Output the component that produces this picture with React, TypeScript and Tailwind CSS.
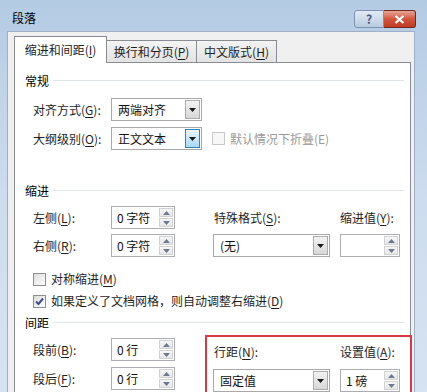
import type { ReactNode } from 'react';
import cn from 'clsx';

const Key = ({ k }: { k: string }) => (
  <>
    (<u className="underline-offset-2">{k}</u>)
  </>
);

const Heading = ({ text, className }: { text: string; className?: string }) => (
  <div className={cn('flex h-[16px] items-center pl-[10px] pr-[6px]', className)}>
    <span className="leading-[16px]">{text}</span>
    <div className="ml-[4px] h-[2px] flex-1 border-t border-b border-t-[#dde5ea] border-b-white" />
  </div>
);

const Arrow = ({ up, color = '#3b3b3b' }: { up?: boolean; color?: string }) => (
  <svg width="7" height="4" viewBox="0 0 7 4">
    <path d={up ? 'M3.5 0L7 4H0z' : 'M0 0h7L3.5 4z'} fill={color} />
  </svg>
);

const Select = ({ value, w, hot }: { value: string; w: string; hot?: boolean }) => (
  <div className={cn('flex h-[23px] border border-[#a8a8a8] bg-white', w)}>
    <div className="flex-1 pl-[6px] leading-[21px] text-[#111]">{value}</div>
    <div
      className={cn(
        'm-[1px] flex w-[15px] items-center justify-center border',
        hot
          ? 'border-[#3c7fb1] bg-gradient-to-b from-[#eaf6fd] to-[#a7d9f5]'
          : 'border-[#acacac] bg-gradient-to-b from-[#f2f2f2] to-[#d8d8d8]'
      )}
    >
      <Arrow color="#1a1a1a" />
    </div>
  </div>
);

const Spin = ({ value, w = 'w-[64px]' }: { value?: string; w?: string }) => (
  <div className={cn('flex h-[23px] border border-[#abadb3] bg-white', w)}>
    <div className="flex-1 pl-[5px] leading-[21px] text-[#111]">{value}</div>
    <div className="m-[1px] flex w-[14px] flex-col gap-[1px]">
      <div className="flex flex-1 items-center justify-center border border-[#d2d2d2] bg-gradient-to-b from-[#f7f7f7] to-[#e6e6e6]">
        <Arrow up color="#6a7a94" />
      </div>
      <div className="flex flex-1 items-center justify-center border border-[#d2d2d2] bg-gradient-to-b from-[#f7f7f7] to-[#e6e6e6]">
        <Arrow color="#6a7a94" />
      </div>
    </div>
  </div>
);

const Check = ({ checked, disabled }: { checked?: boolean; disabled?: boolean }) => (
  <div
    className={cn(
      'flex h-[13px] w-[13px] items-center justify-center border',
      disabled
        ? 'border-[#c9c9c9] bg-[#f7f7f7]'
        : 'border-[#8e8f8f] bg-gradient-to-br from-[#dcdcdc] to-white'
    )}
  >
    {checked && (
      <svg width="9" height="9" viewBox="0 0 9 9">
        <path d="M1 4.5l2.5 2.5L8 1.5" stroke="#3b4f8a" strokeWidth="2" fill="none" />
      </svg>
    )}
  </div>
);

const Label = ({ children, w = 'w-[78px]' }: { children: ReactNode; w?: string }) => (
  <div className={cn('shrink-0 leading-[23px] text-[#1e1e1e]', w)}>{children}</div>
);

export default function App() {
  return (
    <div className="flex h-[392px] w-[427px] flex-col overflow-hidden bg-gradient-to-b from-[#b4cbe4] via-[#cddcee] to-[#d6e3f2] font-['Noto_Sans_CJK_SC',sans-serif] text-[12px]">
      {/* title bar */}
      <div className="flex h-[31px] shrink-0 items-start">
        <div className="ml-[12px] mt-[10px] text-[12px] leading-[16px] text-black">段落</div>
        <div className="ml-auto mr-[11px] mt-[10px] flex">
          <div className="flex h-[18px] w-[30px] items-center justify-center rounded-l-[3px] border border-[#7d93b1] bg-gradient-to-b from-[#e2ebf5] to-[#b9cbe0] text-[12px] font-bold leading-none text-[#4c5c77]">
            ?
          </div>
          <div className="flex h-[18px] w-[32px] items-center justify-center rounded-r-[3px] border border-l-0 border-[#6e2a22] bg-gradient-to-b from-[#e7a597] via-[#d0553f] to-[#c23a22]">
            <svg width="11" height="9" viewBox="0 0 11 9">
              <path d="M1.5 1l8 7M9.5 1l-8 7" stroke="white" strokeWidth="2.2" />
            </svg>
          </div>
        </div>
      </div>

      {/* client */}
      <div className="ml-[7px] mr-[12px] flex flex-1 flex-col border-l border-t border-r border-[#9fb0c6] bg-[#f0f0f0] pl-[6px] pr-[3px]">
        {/* tabs */}
        <div className="flex h-[30px] shrink-0 items-end">
          <div className="relative z-10 -mb-px flex h-[27px] w-[93px] items-start justify-center border border-b-0 border-[#898c95] bg-white pt-[4px] text-[#1e1e1e]">
            缩进和间距<Key k="I" />
          </div>
          <div className="flex h-[22px] w-[90px] items-center justify-center border border-l-0 border-b-0 border-[#898c95] bg-gradient-to-b from-[#f3f3f3] to-[#e3e3e3] text-[#1e1e1e]">
            换行和分页<Key k="P" />
          </div>
          <div className="flex h-[22px] w-[80px] items-center justify-center border border-l-0 border-b-0 border-[#898c95] bg-gradient-to-b from-[#f3f3f3] to-[#e3e3e3] text-[#1e1e1e]">
            中文版式<Key k="H" />
          </div>
        </div>

        {/* panel */}
        <div className="flex flex-1 flex-col border border-b-0 border-[#898c95] bg-white">
          <Heading text="常规" className="mt-[10px]" />

          <div className="mt-[9px] flex h-[23px] pl-[18px]">
            <Label>
              对齐方式<Key k="G" />:
            </Label>
            <Select value="两端对齐" w="w-[91px]" />
          </div>
          <div className="mt-[6px] flex h-[23px] items-center pl-[18px]">
            <Label>
              大纲级别<Key k="O" />:
            </Label>
            <Select value="正文文本" w="w-[91px]" hot />
            <div className="ml-[10px]">
              <Check disabled />
            </div>
            <span className="ml-[5px] text-[#9a9a9a]">默认情况下折叠(E)</span>
          </div>

          <Heading text="缩进" className="mt-[33px]" />

          <div className="mt-[7px] flex h-[23px] pl-[18px]">
            <Label>
              左侧<Key k="L" />:
            </Label>
            <Spin value="0 字符" />
            <Label w="ml-[38px] w-[127px] pl-px">
              特殊格式<Key k="S" />:
            </Label>
            <Label w="w-[70px]">
              缩进值<Key k="Y" />:
            </Label>
          </div>
          <div className="mt-[5px] flex h-[23px] pl-[18px]">
            <Label>
              右侧<Key k="R" />:
            </Label>
            <Spin value="0 字符" />
            <div className="ml-[38px]">
              <Select value="(无)" w="w-[117px]" />
            </div>
            <div className="ml-[10px]">
              <Spin w="w-[60px]" />
            </div>
          </div>

          <div className="mt-[14px] flex h-[16px] items-center pl-[18px]">
            <Check />
            <span className="ml-[5px] text-[#1e1e1e]">
              对称缩进<Key k="M" />
            </span>
          </div>
          <div className="mt-[6px] flex h-[16px] items-center pl-[18px]">
            <Check checked />
            <span className="ml-[5px] text-[#1e1e1e]">
              如果定义了文档网格，则自动调整右缩进<Key k="D" />
            </span>
          </div>

          <Heading text="间距" className="mt-[6px]" />

          <div className="mt-[4px] flex pl-[18px]">
            <div className="flex flex-col pt-[3px]">
              <div className="flex h-[23px]">
                <Label>
                  段前<Key k="B" />:
                </Label>
                <Spin value="0 行" />
              </div>
              <div className="mt-[6px] flex h-[23px]">
                <Label>
                  段后<Key k="F" />:
                </Label>
                <Spin value="0 行" />
              </div>
            </div>

            <div className="ml-[30px] flex h-[70px] w-[207px] flex-col border-2 border-[#d63a45] pl-[6px] pt-[3px]">
              <div className="flex h-[23px]">
                <Label w="w-[127px] pl-px">
                  行距<Key k="N" />:
                </Label>
                <Label w="w-[70px]">
                  设置值<Key k="A" />:
                </Label>
              </div>
              <div className="mt-[6px] flex h-[23px]">
                <Select value="固定值" w="w-[117px]" />
                <div className="ml-[10px]">
                  <Spin value="1 磅" w="w-[60px]" />
                </div>
              </div>
            </div>
          </div>
        </div>
      </div>
    </div>
  );
}
